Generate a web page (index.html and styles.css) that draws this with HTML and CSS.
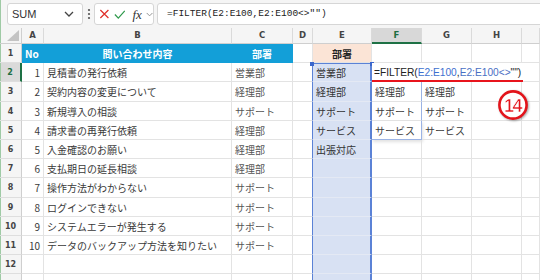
FILE: index.html
```html
<!DOCTYPE html>
<html lang="ja">
<head>
	<meta charset="UTF-8">
	<title>FILTER</title>
	<link rel="stylesheet" href="styles.css">
</head>
<body>
	<div class="bar">
		<div class="namebox">
			<span>SUM</span>
			<svg class="drop" width="10" height="6" viewBox="0 0 10 6"><polyline points="1,1 5,5 9,1" fill="none" stroke="#444" stroke-width="1.3"/></svg>
		</div>
		<svg class="dots" width="4" height="12" viewBox="0 0 4 12"><circle cx="2" cy="2" r="1.1" fill="#555"/><circle cx="2" cy="6" r="1.1" fill="#555"/><circle cx="2" cy="10" r="1.1" fill="#555"/></svg>
		<div class="fxbox">
			<svg width="12" height="12" viewBox="0 0 12 12"><path d="M1.5 1.5 L10.5 10.5 M10.5 1.5 L1.5 10.5" stroke="#e0312b" stroke-width="1.4" fill="none"/></svg>
			<svg width="13" height="11" viewBox="0 0 13 11"><polyline points="1,5.5 4.8,9.5 12,1.5" stroke="#2f9a4c" stroke-width="1.4" fill="none"/></svg>
			<span class="fxlabel">fx</span>
			<svg width="8" height="5" viewBox="0 0 8 5"><polyline points="0.8,0.8 4,4 7.2,0.8" fill="none" stroke="#888" stroke-width="1"/></svg>
		</div>
		<div class="formula">=FILTER(E2:E100,E2:E100&lt;&gt;"")</div>
	</div>

	<div class="sheet">
		<div class="corner"></div>
		<div class="ch">A</div><div class="ch">B</div><div class="ch">C</div><div class="ch">D</div><div class="ch">E</div><div class="ch on">F</div><div class="ch">G</div><div class="ch">H</div><div class="ch"></div>

		<div class="rh">1</div>
		<div class="c hd">No</div><div class="c hd mid">問い合わせ内容</div><div class="c hd mid">部署</div><div class="c"></div><div class="c e1">部署</div><div class="c"></div><div class="c"></div><div class="c"></div><div class="c"></div>

		<div class="rh on">2</div>
		<div class="c num">1</div><div class="c">見積書の発行依頼</div><div class="c dept">営業部</div><div class="c"></div><div class="c sel first">営業部</div>
		<div class="c f2"><span class="edit">=FILTER(<b class="r1">E2:E100</b>,<b class="r2">E2:E100&lt;&gt;</b>"")</span></div><div class="c"></div><div class="c"></div><div class="c"></div>

		<div class="rh">3</div>
		<div class="c num">2</div><div class="c">契約内容の変更について</div><div class="c dept">経理部</div><div class="c"></div><div class="c sel">経理部</div><div class="c spill">経理部</div><div class="c">経理部</div><div class="c"></div><div class="c"></div>

		<div class="rh">4</div>
		<div class="c num">3</div><div class="c">新規導入の相談</div><div class="c dept">サポート</div><div class="c"></div><div class="c sel">サポート</div><div class="c spill">サポート</div><div class="c">サポート</div><div class="c"></div><div class="c"></div>

		<div class="rh">5</div>
		<div class="c num">4</div><div class="c">請求書の再発行依頼</div><div class="c dept">経理部</div><div class="c"></div><div class="c sel">サービス</div><div class="c spill last">サービス</div><div class="c">サービス</div><div class="c"></div><div class="c"></div>

		<div class="rh">6</div>
		<div class="c num">5</div><div class="c">入金確認のお願い</div><div class="c dept">経理部</div><div class="c"></div><div class="c sel">出張対応</div><div class="c"></div><div class="c"></div><div class="c"></div><div class="c"></div>

		<div class="rh">7</div>
		<div class="c num">6</div><div class="c">支払期日の延長相談</div><div class="c dept">経理部</div><div class="c"></div><div class="c sel"></div><div class="c"></div><div class="c"></div><div class="c"></div><div class="c"></div>

		<div class="rh">8</div>
		<div class="c num">7</div><div class="c">操作方法がわからない</div><div class="c dept">サポート</div><div class="c"></div><div class="c sel"></div><div class="c"></div><div class="c"></div><div class="c"></div><div class="c"></div>

		<div class="rh">9</div>
		<div class="c num">8</div><div class="c">ログインできない</div><div class="c dept">サポート</div><div class="c"></div><div class="c sel"></div><div class="c"></div><div class="c"></div><div class="c"></div><div class="c"></div>

		<div class="rh">10</div>
		<div class="c num">9</div><div class="c">システムエラーが発生する</div><div class="c dept">サポート</div><div class="c"></div><div class="c sel"></div><div class="c"></div><div class="c"></div><div class="c"></div><div class="c"></div>

		<div class="rh">11</div>
		<div class="c num">10</div><div class="c">データのバックアップ方法を知りたい</div><div class="c dept">サポート</div><div class="c"></div><div class="c sel"></div><div class="c"></div><div class="c"></div><div class="c"></div><div class="c"></div>

		<div class="rh">12</div>
		<div class="c"></div><div class="c"></div><div class="c"></div><div class="c"></div><div class="c sel"></div><div class="c"></div><div class="c"></div><div class="c"></div><div class="c"></div>

		<div class="rh"></div>
		<div class="c"></div><div class="c"></div><div class="c"></div><div class="c"></div><div class="c sel"></div><div class="c"></div><div class="c"></div><div class="c"></div><div class="c"></div>

		<svg class="mark" width="32" height="32" viewBox="0 0 32 32">
			<circle cx="16" cy="16" r="13.6" fill="#fff" stroke="#e3141b" stroke-width="2.6"/>
			<text x="15.6" y="23" text-anchor="middle" class="marknum">14</text>
		</svg>
	</div>
</body>
</html>
```

FILE: styles.css
```css
*{margin:0;padding:0;box-sizing:border-box;}
body{width:540px;height:280px;overflow:hidden;background:#fff;font-family:"Noto Sans CJK JP",sans-serif;}

/* formula bar */
.bar{height:28px;background:#f5f5f5;display:flex;align-items:center;padding-left:7px;box-shadow:inset 1px 0 #9fcaa5;}
.namebox{width:76px;height:22px;background:#fff;border:1px solid #d6d6d6;border-radius:3px;display:flex;align-items:center;justify-content:space-between;padding:0 8px 0 4px;font-family:"Liberation Sans",sans-serif;font-size:11px;color:#333;}
.dots{margin:0 3px 0 4px;}
.fxbox{width:60px;height:22px;background:#fff;border:1px solid #d6d6d6;border-radius:3px;display:flex;align-items:center;padding-left:4px;gap:4px;}
.fxlabel{font-family:"Liberation Serif",serif;font-style:italic;font-size:13px;color:#333;margin-left:3px;line-height:1;}
.formula{flex:1;height:22px;margin-left:3px;margin-right:-4px;background:#fff;border:1px solid #d6d6d6;border-radius:3px;padding-left:9px;font-family:"Liberation Mono",monospace;font-size:9.5px;line-height:20px;color:#222;}

/* sheet */
.sheet{position:relative;display:grid;grid-template-columns:22px 22px 188px 61px 20px 59px 50px 50px 50px 18px;grid-template-rows:16px repeat(13,19.2px);}
.corner{background:#f5f5f5;border-right:1px solid #cfcfcf;border-bottom:1px solid #cfcfcf;position:relative;box-shadow:inset 1px 0 #9fcaa5;}
.corner:after{content:"";position:absolute;right:2px;bottom:2px;width:12px;height:11px;background:#c4c4c4;clip-path:polygon(100% 0,100% 100%,0 100%);}
.ch{background:#f5f5f5;border-right:1px solid #dadada;border-bottom:1px solid #cfcfcf;font-family:"DejaVu Sans",sans-serif;font-size:8.5px;font-weight:bold;color:#444;text-align:center;line-height:15px;}
.ch.on{background:#d8d8d8;color:#1e6e42;border-bottom:2px solid #1e7145;}
.rh{background:#f5f5f5;border-right:1px solid #cfcfcf;border-bottom:1px solid #dedede;font-family:"DejaVu Sans",sans-serif;font-size:8px;font-weight:bold;color:#444;text-align:center;line-height:20px;box-shadow:inset 1px 0 #9fcaa5;}
.rh.on{background:#dadada;color:#1e6e42;border-right:2px solid #1e7145;}

.c{border-right:1px solid #e3e3e3;border-bottom:1px solid #e3e3e3;font-size:10px;line-height:19px;padding:0 3px;color:#3a3a3a;white-space:nowrap;overflow:hidden;}
.num{text-align:right;}
.dept{color:#555;}
.hd{background:#139fd8;border-color:#139fd8;color:#fff;font-weight:bold;}
.mid{text-align:center;}
.e1{background:#fbe4d6;color:#222;font-weight:bold;text-align:center;}

/* referenced range E2:E100 */
.sel{background:#d8e1f3;border-bottom-color:#e4e9f4;border-left:1px solid #5b82d6;border-right:2px solid #5b82d6;margin-left:-1px;padding-left:3px;color:#333;overflow:visible;}
.sel.first{position:relative;border-top:1px solid #5b82d6;line-height:18px;}
.sel.first:before,.sel.first:after{content:"";position:absolute;top:-2px;width:4px;height:4px;background:#3b67cc;}
.sel.first:before{left:-3px;}
.sel.first:after{right:-4px;}

/* cell being edited */
.f2{position:relative;z-index:2;overflow:visible;}
.edit{position:absolute;left:0;top:0;bottom:-1px;padding:0 2px 0 2px;background:#fff;border-bottom:2px solid #e8141c;font-family:"Liberation Sans",sans-serif;font-size:10.2px;line-height:19px;color:#222;}
.edit b{font-weight:normal;}
.r1{color:#3d6fcf;}
.r2{color:#4a6fc4;}

.spill{border-right-color:#9bb3e4;}
.spill.last{border-bottom-color:#9bb3e4;box-shadow:1px 2px 3px rgba(0,0,0,.12);}

.mark{position:absolute;left:497px;top:61px;filter:drop-shadow(1px 1px 1px rgba(0,0,0,.35));}
.marknum{font-family:"Liberation Sans",sans-serif;font-weight:bold;font-size:18px;letter-spacing:-1.5px;fill:#e3141b;stroke:#fff;stroke-width:.5px;}
```
